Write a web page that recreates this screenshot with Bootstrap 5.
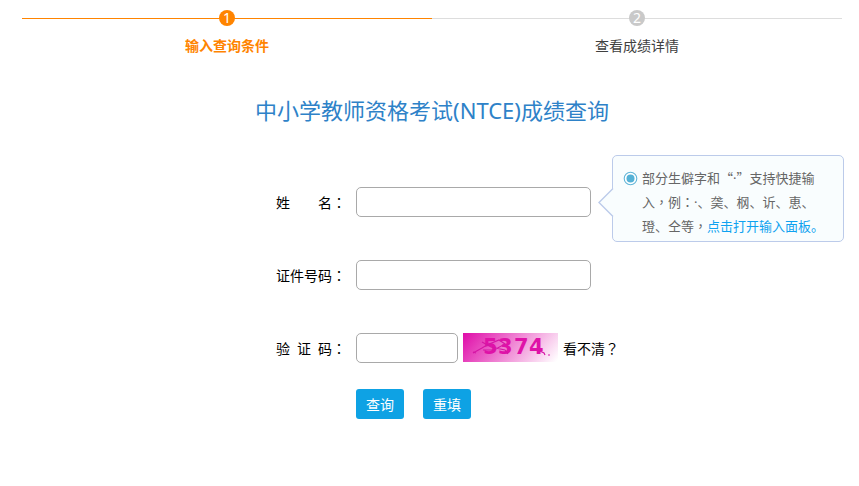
<!DOCTYPE html>
<html lang="zh-CN">
<head>
<meta charset="utf-8">
<meta name="viewport" content="width=device-width, initial-scale=1">
<title>中小学教师资格考试(NTCE)成绩查询</title>
<link href="https://cdn.jsdelivr.net/npm/bootstrap@5.3.0/dist/css/bootstrap.min.css" rel="stylesheet">
<style>
body { font: 14px/20px "Noto Sans CJK SC", sans-serif; color: #000; background: #fff; }
.page { padding: 10px 17px 0 22px; }
.step-item { color: #404040; position: relative; }
.step-item::before { content: ""; position: absolute; top: 8px; left: 0; right: 0; height: 1px; background: #ddd; }
.step-item.current { color: #ff8400; font-weight: 700; }
.step-item.current::before { background: #ff8400; }
.step-dot { position: relative; width: 16px; height: 16px; line-height: 16px; margin-bottom: 9px; background: #c9c9c9; color: #fff; font-family: "Noto Sans", sans-serif; font-weight: 400; }
.current .step-dot { background: #ff8400; }
.page-title { font: 22px/32px "Noto Sans", "Noto Sans CJK SC", sans-serif; color: #2e82c8; margin: 39px 0 61px; }
.query-form { width: 376px; padding-left: 32px; }
.line { min-height: 30px; margin-bottom: 43px; }
.line-code { margin-bottom: 26px; }
.line-label { width: 80px; }
.line-label > span:first-child { width: 56px; }
.mid { font-family: "Noto Sans CJK TC", sans-serif; }
.dot { font-family: "Noto Sans", sans-serif; }
.field { width: 235px; height: 30px; border: 1px solid #a9a9a9; border-radius: 5px; padding: 4px 8px; font-size: 14px; }
.field-code { width: 102px; }
.code-row { gap: 5px; }
.act { width: 48px; height: 30px; padding: 0; font-size: 14px; line-height: 30px; border: 0; border-radius: 3px; background: #0ea2e4; color: #fff; }
.actions { gap: 19px; padding-left: 80px; }
.tip { position: absolute; left: 100%; top: -32px; width: 232px; margin-left: 21px; padding: 10px 16px 3px 10px; font-size: 13px; line-height: 24px; color: #666; background: #f9fdfe; border: 1px solid #bccbea; border-radius: 5px; }
.tip a { color: #0ea2f0; text-decoration: none; }
.tip p { width: 183px; }
.tip-dot { margin-top: 5px; }
.tip-arrow { position: absolute; left: -15px; top: 32px; }
</style>
<script src="https://cdn.jsdelivr.net/npm/bootstrap@5.3.0/dist/js/bootstrap.bundle.min.js"></script>
</head>
<body>
<main class="page">
  <ol class="list-unstyled d-flex mb-0">
    <li class="step-item current flex-fill w-50 d-flex flex-column align-items-center" aria-current="step">
      <span class="step-dot rounded-circle text-center">1</span>
      <span>输入查询条件</span>
    </li>
    <li class="step-item flex-fill w-50 d-flex flex-column align-items-center">
      <span class="step-dot rounded-circle text-center">2</span>
      <span>查看成绩详情</span>
    </li>
  </ol>

  <h1 class="page-title text-center">中小学教师资格考试(NTCE)成绩查询</h1>

  <form class="query-form mx-auto">
    <div class="line d-flex align-items-center">
      <label class="line-label d-flex flex-shrink-0" for="name"><span class="d-flex justify-content-between"><span>姓</span><span>名</span></span><span class="mid" lang="zh-TW">：</span></label>
      <div class="position-relative">
        <input class="field form-control" type="text" id="name">
        <div class="tip d-flex">
          <svg class="tip-arrow" width="16" height="30" viewBox="0 0 16 30" aria-hidden="true"><path d="M16 0.5H15L1 14.5 15 28.5H16z" fill="#f9fdfe"/><path d="M15 .5 1 14.5 15 28.5" fill="none" stroke="#bccbea" stroke-width="1.4"/></svg>
          <svg class="tip-dot flex-shrink-0 me-1" width="15" height="15" viewBox="0 0 15 15" aria-hidden="true"><circle cx="7.5" cy="7.5" r="6.3" fill="#fff" stroke="#62b5d8" stroke-width="1.1"/><circle cx="7.5" cy="7.5" r="4" fill="#55b1d6"/></svg>
          <p class="mb-0 flex-shrink-0">部分生僻字和“<span class="dot">·</span>”支持快捷输入<span class="mid" lang="zh-TW">，</span>例<span class="mid" lang="zh-TW">：</span><span class="dot">·</span>、䶮、㭎、䜣、恵、璒、仝等<span class="mid" lang="zh-TW">，</span><a href="#">点击打开输入面板。</a></p>
        </div>
      </div>
    </div>

    <div class="line d-flex align-items-center">
      <label class="line-label d-flex flex-shrink-0" for="idno"><span>证件号码</span><span class="mid" lang="zh-TW">：</span></label>
      <input class="field form-control" type="text" id="idno">
    </div>

    <div class="line line-code d-flex align-items-center">
      <label class="line-label d-flex flex-shrink-0" for="code"><span class="d-flex justify-content-between"><span>验</span><span>证</span><span>码</span></span><span class="mid" lang="zh-TW">：</span></label>
      <div class="code-row d-flex align-items-start">
        <input class="field field-code form-control" type="text" id="code">
        <svg class="flex-shrink-0" width="95" height="29" viewBox="0 0 95 29" role="img" aria-label="验证码">
          <defs><linearGradient id="pink" gradientUnits="userSpaceOnUse" x1="14" y1="-14" x2="81" y2="43"><stop offset="0" stop-color="#e010aa"/><stop offset="1" stop-color="#fff"/></linearGradient></defs>
          <rect width="95" height="29" fill="url(#pink)"/>
          <text x="20 35 51 66" y="21" font-family="DejaVu Sans" font-weight="700" font-size="21" fill="#df12a8">5374</text>
          <path d="M10 20 19 15 24 12 36 7 42 11 31 17 20 17M19 9 28 14 42 17 45 21M10 19l3 1M77 18l4 2 1 2M85 22h2" fill="none" stroke="#d516a5" stroke-width="1.2"/>
        </svg>
        <a class="text-black text-decoration-none text-nowrap align-self-center" href="#">看不清<span class="mid" lang="zh-TW">？</span></a>
      </div>
    </div>

    <div class="actions d-flex">
      <button class="act btn" type="submit">查询</button>
      <button class="act btn" type="reset">重填</button>
    </div>
  </form>
</main>
</body>
</html>
